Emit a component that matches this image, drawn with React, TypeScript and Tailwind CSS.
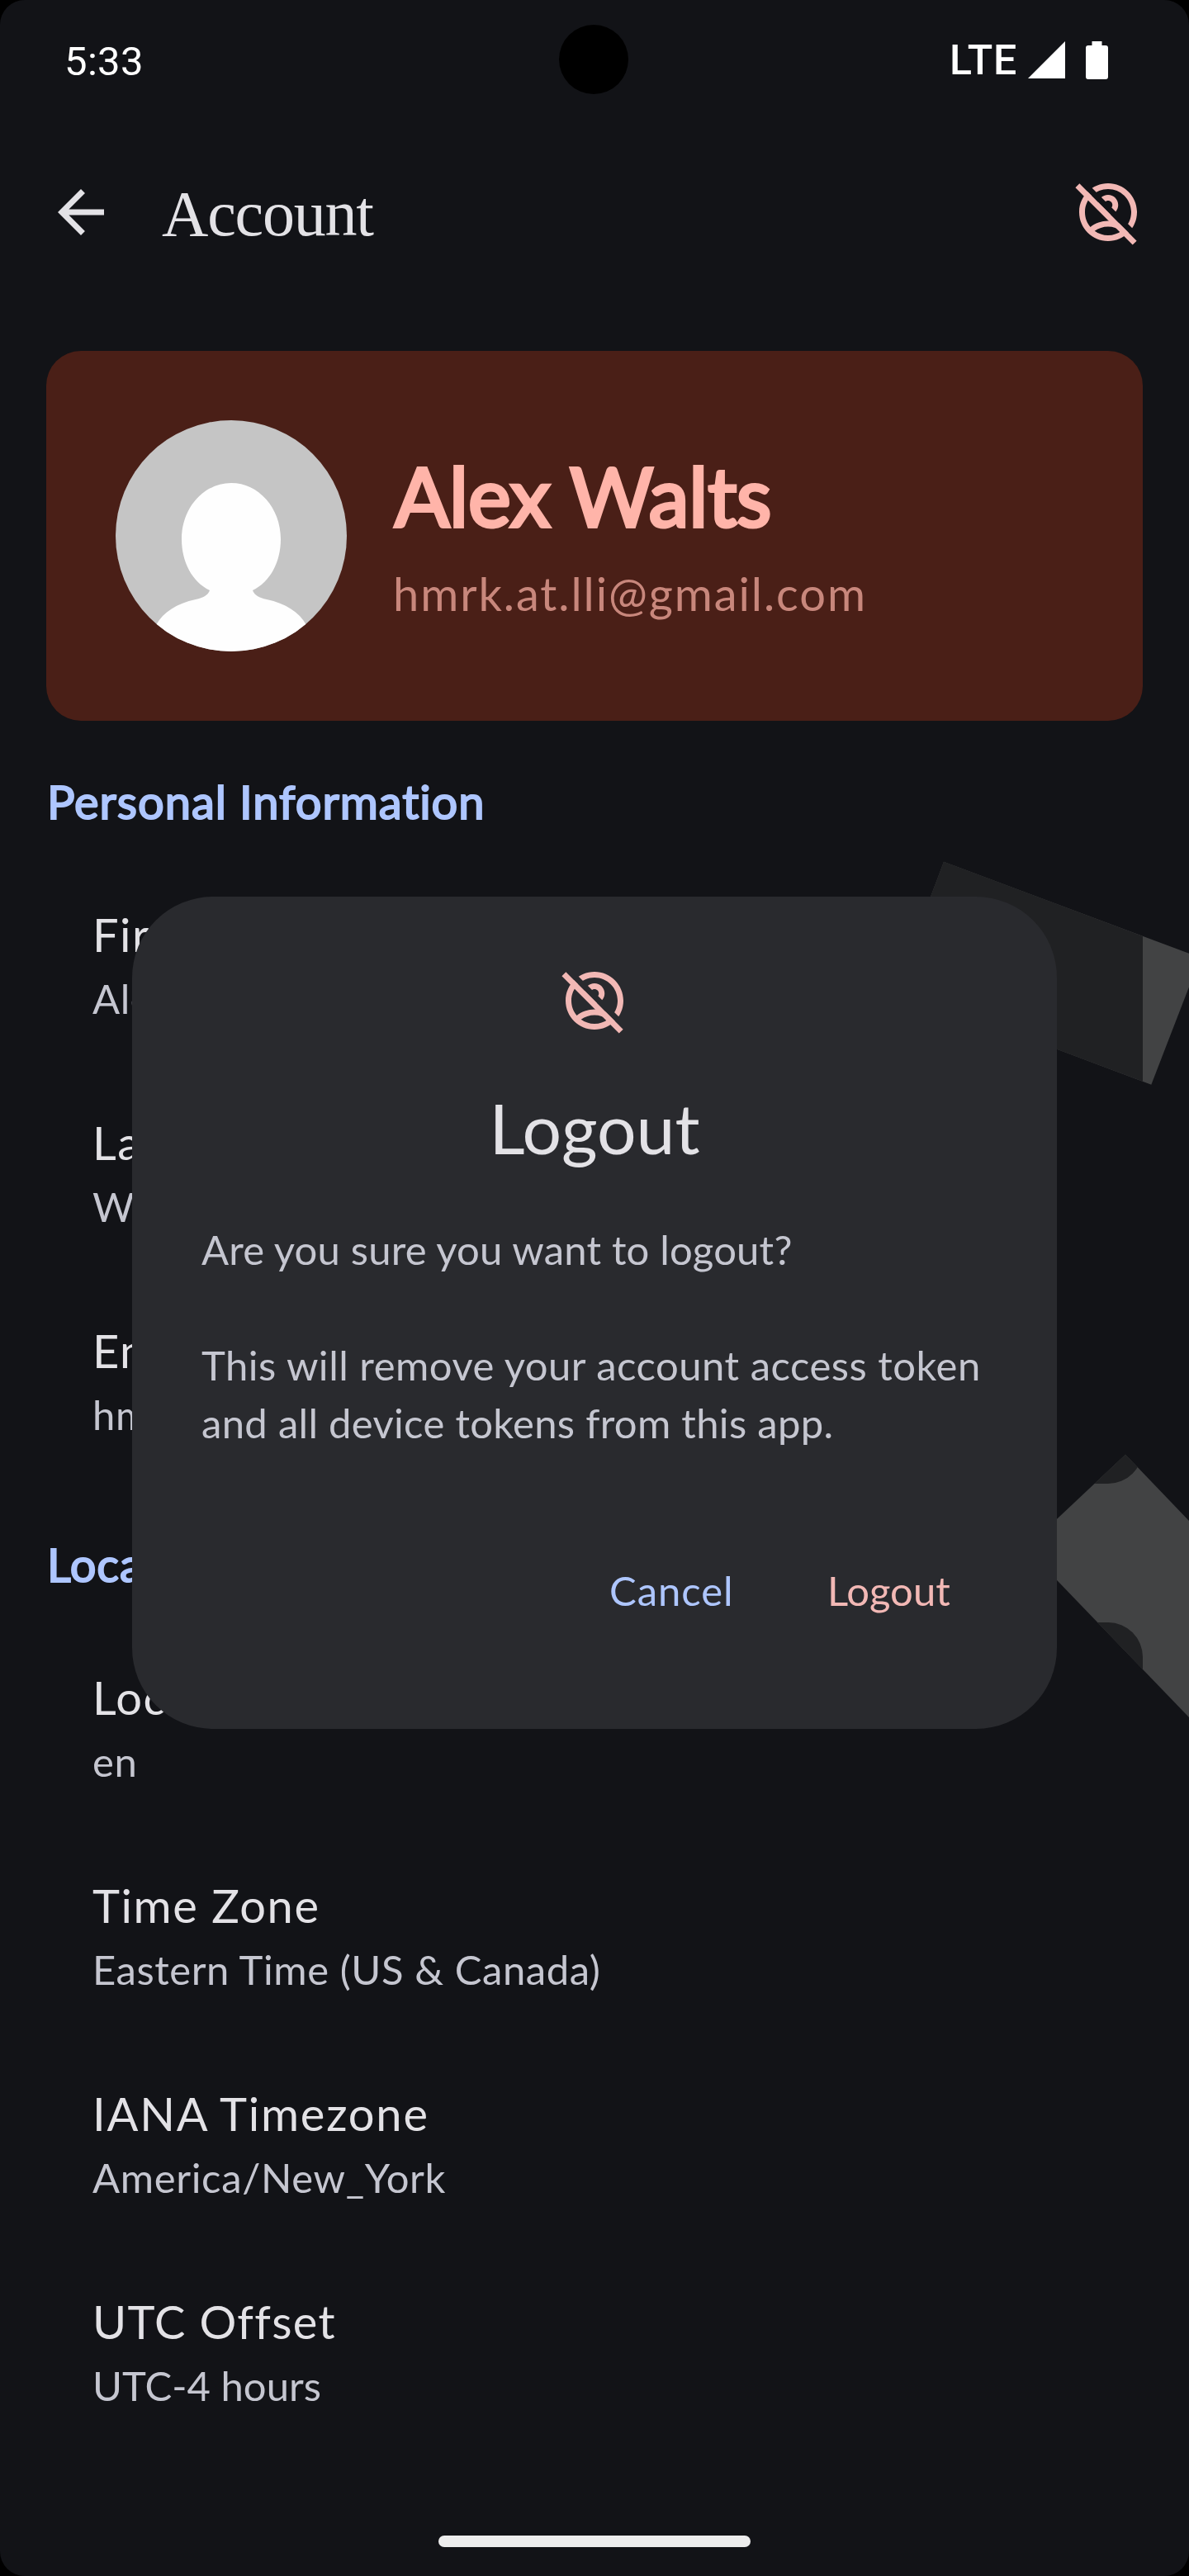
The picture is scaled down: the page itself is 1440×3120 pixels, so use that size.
import React from "react";

type Field = { label: string; value: string; labelTracking: string; valueTracking: string };

const personal: Field[] = [
  { label: "First Name", value: "Alex", labelTracking: "tracking-[1.5px]", valueTracking: "tracking-[0.6px]" },
  { label: "Last Name", value: "Walts", labelTracking: "tracking-[1.5px]", valueTracking: "tracking-[0.6px]" },
  { label: "Email", value: "hmrk.at.lli@gmail.com", labelTracking: "tracking-[1.5px]", valueTracking: "tracking-[0.6px]" },
];

const locale: Field[] = [
  { label: "Locale", value: "en", labelTracking: "tracking-[1.5px]", valueTracking: "tracking-[0.6px]" },
  { label: "Time Zone", value: "Eastern Time (US & Canada)", labelTracking: "tracking-[1.6px]", valueTracking: "tracking-[0.56px]" },
  { label: "IANA Timezone", value: "America/New_York", labelTracking: "tracking-[1.8px]", valueTracking: "tracking-[0.65px]" },
  { label: "UTC Offset", value: "UTC-4 hours", labelTracking: "tracking-[1.3px]", valueTracking: "tracking-[0.03px]" },
];

function NoAccountIcon({ id }: { id: string }) {
  return (
    <svg className="size-[84px] overflow-visible" viewBox="0 0 24 24" fill="#f2b8b5">
      <clipPath id={id}>
        <path d="M-2 -4.83 L24 -4.83 L26 23.17 Z M0 0 L26 26 L-2 26 L-2 -2 Z" />
      </clipPath>
      <path
        clipPath={`url(#${id})`}
        fillRule="evenodd"
        d="M12 2C6.48 2 2 6.48 2 12s4.48 10 10 10 10-4.48 10-10S17.52 2 12 2zM7.35 18.5C8.66 17.56 10.26 17 12 17s3.34.56 4.65 1.5c-1.31.94-2.91 1.5-4.65 1.5s-3.34-.56-4.65-1.5zm10.79-1.38C16.45 15.8 14.32 15 12 15s-4.45.8-6.14 2.12C4.7 15.73 4 13.95 4 12c0-4.42 3.58-8 8-8s8 3.58 8 8c0 1.95-.7 3.73-1.86 5.12zM12 6c-1.93 0-3.5 1.57-3.5 3.5S10.07 13 12 13s3.5-1.57 3.5-3.5S13.93 6 12 6zm0 5c-.83 0-1.5-.67-1.5-1.5S11.17 8 12 8s1.5.67 1.5 1.5S12.83 11 12 11z"
      />
      <path d="M2.1 2.1 L21.9 21.9 L20.49 23.31 L0.69 3.51 Z" />
    </svg>
  );
}

function StatusBar() {
  return (
    <div className="flex h-[145px] items-start justify-between pr-[98px] pl-[78px] font-['Roboto',sans-serif] text-white">
      <span className="mt-[46px] text-[49px] leading-[58px] tracking-[0.35px]">5:33</span>
      <div className="flex items-start">
        <span className="mt-[44px] text-[50px] leading-[58px] font-medium tracking-[0.8px]">LTE</span>
        <svg className="mt-[50px] ml-[13px] h-[45px] w-[45px]" viewBox="0 0 45 45" fill="white">
          <path d="M0 45 L45 0 L45 45 Z" />
        </svg>
        <svg className="mt-[50px] ml-[25px] h-[46px] w-[27px]" viewBox="0 0 27 46" fill="white">
          <path d="M7.5 0h12v5h4.5a3 3 0 0 1 3 3v35a3 3 0 0 1-3 3h-21a3 3 0 0 1-3-3v-35a3 3 0 0 1 3-3h4.5z" />
        </svg>
      </div>
    </div>
  );
}

function AppBar() {
  return (
    <header className="flex h-[224px] items-center px-[56px]">
      <svg className="size-[84px]" viewBox="0 0 24 24" fill="#e3e2e6">
        <path d="M20 11H7.83l5.59-5.59L12 4l-8 8 8 8 1.41-1.41L7.83 13H20v-2z" />
      </svg>
      <h1 className="mt-[4px] ml-[56px] flex-1 font-['Liberation_Serif',serif] text-[78px] leading-[98px] tracking-[-1.2px] text-[#e3e2e6]">
        Account
      </h1>
      <NoAccountIcon id="bar-icon" />
    </header>
  );
}

function ProfileCard() {
  return (
    <section className="mx-[56px] mt-[56px] flex h-[448px] items-center gap-[56px] rounded-[42px] bg-[#4a1f17] px-[84px]">
      <svg className="size-[280px] rounded-full" viewBox="0 0 280 280">
        <rect width="280" height="280" fill="#c5c5c5" />
        <path
          fill="#fefefe"
          d="M140 76C173 76 200 106 200 144C200 172 187 196 166 206C168 212 174 215 183 217C206 222 222 232 231 248C236 258 238 268 239 280H41C42 268 44 258 49 248C58 232 74 222 97 217C106 215 112 212 114 206C93 196 80 172 80 144C80 106 107 76 140 76Z"
        />
      </svg>
      <div className="flex flex-col gap-[14px]">
        <h2 className="pl-[2px] text-[98px] leading-[126px] tracking-[-0.2px] text-[#ffb4a9] [-webkit-text-stroke:4px_#ffb4a9]">
          Alex Walts
        </h2>
        <p className="text-[56px] leading-[84px] tracking-[1.91px] text-[#c8877c]">hmrk.at.lli@gmail.com</p>
      </div>
    </section>
  );
}

function Group({ title, fields }: { title: string; fields: Field[] }) {
  return (
    <section className="px-[56px]">
      <h3 className="pt-[56px] pb-[28px] pl-px text-[56px] leading-[84px] tracking-[0.95px] text-[#aec6ff] [-webkit-text-stroke:2px_#aec6ff]">
        {title}
      </h3>
      <div>
        {fields.map((f) => (
          <div key={f.label} className="px-[56px] py-[49px]">
            <div className={`text-[56px] leading-[84px] text-[#e3e2e6] ${f.labelTracking}`}>{f.label}</div>
            <div className={`text-[49px] leading-[70px] text-[#c5c6d0] ${f.valueTracking}`}>{f.value}</div>
          </div>
        ))}
      </div>
    </section>
  );
}

function Shapes() {
  return (
    <>
      <path d="M1143 1043.7 L1453.7 1160 L1394.3 1313.7 L1085 1197.5 Z" />
      <path d="M1363 1761.7 L1540 1946 L1465 2106 L1242.5 1875 Z" />
    </>
  );
}

function Backdrop() {
  return (
    <svg className="absolute inset-0 h-full w-full" viewBox="0 0 1440 3120">
      <clipPath id="groups">
        <rect x="56" y="1041" width="1328" height="756" rx="42" />
        <rect x="56" y="1965" width="1328" height="1008" rx="42" />
      </clipPath>
      <g fill="#424344">
        <Shapes />
      </g>
      <g clipPath="url(#groups)">
        <g fill="#202123">
          <Shapes />
        </g>
      </g>
    </svg>
  );
}

function LogoutDialog() {
  return (
    <div className="absolute top-[1086px] left-[160px] flex h-[1008px] w-[1120px] flex-col rounded-[98px] bg-[#292a2e] p-[84px]">
      <div className="flex justify-center">
        <NoAccountIcon id="dialog-icon" />
      </div>
      <h2 className="mt-[56px] text-center text-[84px] leading-[112px] text-[#e3e2e6]">Logout</h2>
      <div className="mt-[56px] text-[49px] leading-[70px] whitespace-nowrap text-[#c5c6d0]">
        <p className="tracking-[0.19px]">Are you sure you want to logout?</p>
        <p className="mt-[70px] tracking-[0.5px]">This will remove your account access token</p>
        <p className="tracking-[0.3px]">and all device tokens from this app.</p>
      </div>
      <div className="mt-[84px] flex h-[168px] items-center justify-end gap-[28px] text-[49px] leading-[70px]">
        <button className="w-[236px] px-[42px] text-left tracking-[0.94px] text-[#aec6ff]">Cancel</button>
        <button className="w-[236px] px-[42px] text-left text-[#f2b8b5]">Logout</button>
      </div>
    </div>
  );
}

export default function App() {
  return (
    <div className="h-[3120px] w-[1440px] overflow-hidden bg-black">
      <div className="relative h-[3120px] overflow-hidden rounded-[30px] bg-[#121317] font-['Lato',sans-serif]">
        <Backdrop />
        <div className="relative">
          <StatusBar />
          <AppBar />
          <ProfileCard />
          <Group title="Personal Information" fields={personal} />
          <Group title="Localization" fields={locale} />
        </div>
        <LogoutDialog />
        <div className="absolute top-[30px] left-[677px] size-[84px] rounded-full bg-black" />
        <div className="absolute top-[3071px] left-[531px] h-[14px] w-[378px] rounded-full bg-[#ededed]" />
      </div>
    </div>
  );
}
